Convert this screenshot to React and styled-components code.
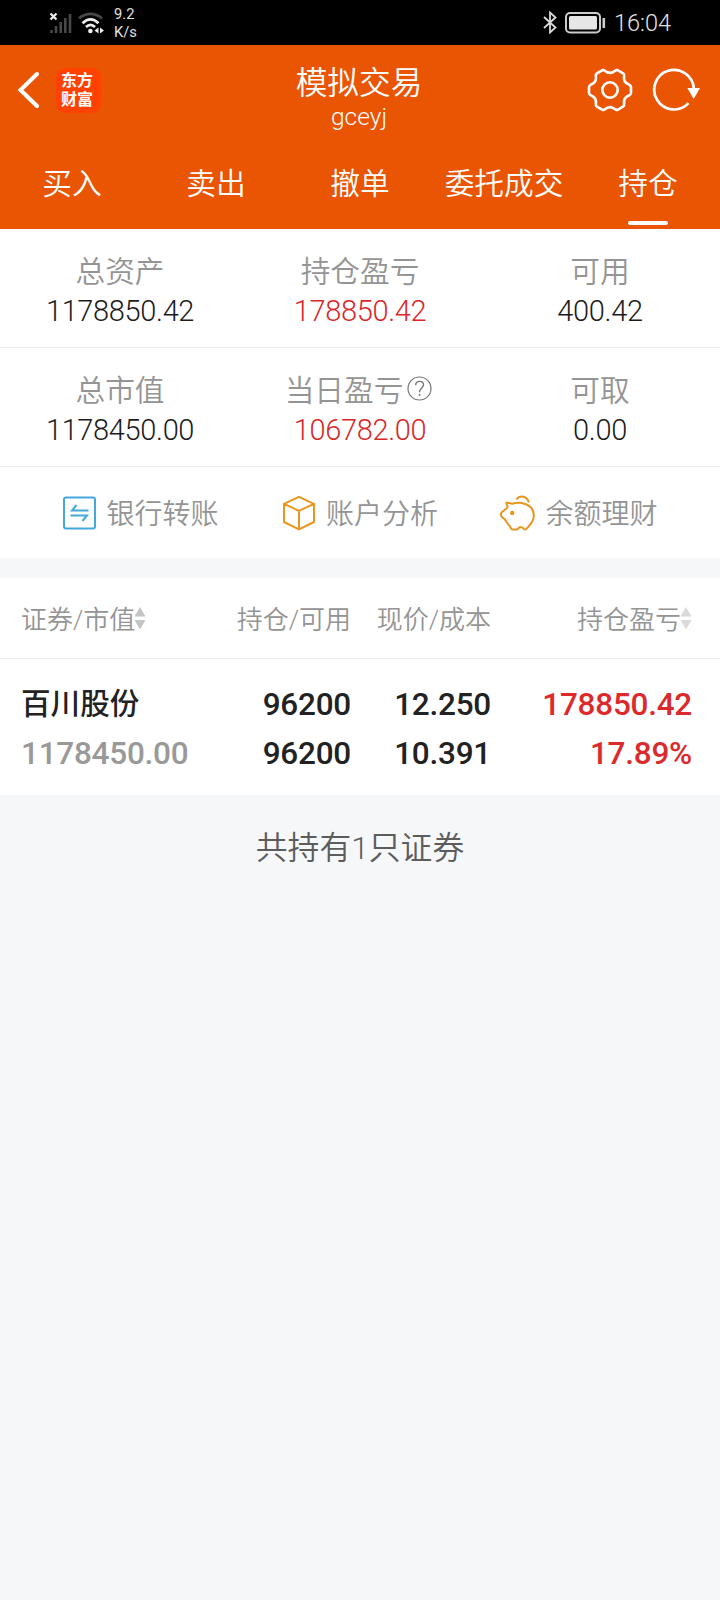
import React from "react";
import styled, { createGlobalStyle } from "styled-components";

const GlobalStyle = createGlobalStyle`
  * {
    box-sizing: border-box;
  }

  body {
    margin: 0;
    background: #f6f7f9;
    font-family: Roboto, "Noto Sans CJK SC", sans-serif;
    font-weight: 350;
  }
`;

const Page = styled.div`
  width: 720px;
  min-height: 1600px;
  background: #f6f7f9;
  white-space: nowrap;
`;

const StatusBar = styled.div`
  display: flex;
  align-items: center;
  height: 45px;
  padding: 0 49px;
  background: #000;
  color: #e2e2e2;
`;

const Signals = styled.div`
  display: flex;
  align-items: center;
  gap: 6px;
`;

const Speed = styled.div`
  margin-left: 10px;
  padding-top: 1px;
  font-size: 14.7px;
  font-weight: 400;
  line-height: 18px;
`;

const StatusRight = styled.div`
  display: flex;
  align-items: center;
  gap: 8px;
  margin-left: auto;
`;

const Clock = styled.span`
  padding-top: 1px;
  font-size: 23.5px;
  line-height: 28px;
`;

const Header = styled.header`
  height: 184px;
  background: #ea5504;
  color: #fff;
`;

const TitleBar = styled.div`
  display: grid;
  grid-template-columns: 1fr auto 1fr;
  align-items: center;
  height: 90px;
  padding: 0 19px 0 17px;
`;

const Left = styled.div`
  display: flex;
  align-items: center;
  gap: 16.5px;
`;

const Right = styled.div`
  display: flex;
  align-items: center;
  justify-content: flex-end;
  gap: 19px;
`;

const Logo = styled.div`
  width: 45px;
  height: 45px;
  padding: 3px 2px 0 0;
  border-radius: 9px;
  background: #ff4202;
  font-size: 16px;
  font-weight: 700;
  line-height: 19.5px;
  text-align: center;
`;

const Title = styled.div`
  align-self: start;
  padding-top: 19px;
  text-align: center;
`;

const TitleText = styled.h1`
  margin: 0;
  font-size: 31.7px;
  font-weight: inherit;
  line-height: 39px;
`;

const Account = styled.div`
  font-size: 24.5px;
  line-height: 28px;
`;

const Tabs = styled.nav`
  display: grid;
  grid-template-columns: repeat(5, 1fr);
  height: 94px;
`;

const Tab = styled.div`
  display: flex;
  flex-direction: column;
  align-items: center;
  padding-top: 29px;
  font-size: 29.7px;
  line-height: 40px;

  &::after {
    content: "";
    width: 40px;
    height: 4px;
    margin-top: 17px;
    border-radius: 2px;
    background: ${(props) => (props.$active ? "#fff" : "transparent")};
  }
`;

const StatRow = styled.div`
  display: grid;
  grid-template-columns: repeat(3, 1fr);
  height: 119px;
  padding-top: 23px;
  border-bottom: 1px solid #e9e9e9;
  background: #fff;
`;

const Stat = styled.div`
  display: flex;
  flex-direction: column;
  align-items: center;
  font-size: 29.7px;
  line-height: 39px;
`;

const StatLabel = styled.div`
  display: flex;
  align-items: center;
  gap: 4px;
  color: #949494;

  svg {
    margin: 0 3px 5px 0;
  }
`;

const StatValue = styled.div`
  font-size: 29px;
  letter-spacing: -0.35px;
  line-height: 40px;
  color: ${(props) => (props.$red ? "#d7292b" : "#1c1c1c")};
`;

const Actions = styled.div`
  display: flex;
  align-items: center;
  justify-content: space-evenly;
  height: 91px;
  padding-left: 1px;
  background: #fff;
`;

const Action = styled.div`
  display: flex;
  align-items: center;
  gap: 10px;
  color: #949494;
  font-size: 28px;
  line-height: 40px;

  span {
    padding-top: 2px;
    margin-bottom: -3px;
  }
`;

const Holdings = styled.section`
  margin-top: 20px;
  background: #fff;
`;

const HoldingGrid = styled.div`
  display: grid;
  grid-template-columns: 190px 140px 140px 1fr;
  padding: 0 28px 0 21px;
`;

const HoldingHead = styled(HoldingGrid)`
  height: 81px;
  border-bottom: 1px solid #e9e9e9;
  color: #949494;
  font-size: 26px;
  line-height: 84px;
`;

const HeadCell = styled.div`
  display: flex;
  align-items: center;
  justify-content: ${(props) => (props.$left ? "flex-start" : "flex-end")};

  svg {
    margin: 0 0 5px -1px;
  }
`;

const HoldingRow = styled(HoldingGrid)`
  height: 136px;
  padding-top: 21px;
  color: #222;
  font-size: 31.5px;
  font-weight: 500;
  letter-spacing: -0.25px;
  line-height: 49px;
`;

const HoldingCell = styled.div`
  text-align: ${(props) => (props.$left ? "left" : "right")};
  color: ${(props) => (props.$red ? "#dc2a2c" : "inherit")};
`;

const StockName = styled.div`
  font-size: 29.6px;
  letter-spacing: 0;
`;

const MarketValue = styled.div`
  color: #999;
`;

const Summary = styled.div`
  padding-top: 29px;
  color: #5c5c5c;
  font-size: 31.8px;
  line-height: 48px;
  text-align: center;
`;

const SignalIcon = () => (
  <svg width="23" height="22" viewBox="0 0 23 22" fill="none">
    <path
      d="M2.5 18v3M7 14v7M11.7 10v11M16.3 6v15M21 2v19"
      stroke="#484848"
      strokeWidth="2.6"
    />
    <path d="M1.5 1.5l6 6M7.5 1.5l-6 6" stroke="#eee" strokeWidth="2.2" />
  </svg>
);

const WifiIcon = () => (
  <svg width="26" height="22" viewBox="0 0 26 22" fill="none">
    <path d="M1 6.2Q12.5-2.5 24 6.2" stroke="#484848" strokeWidth="2.6" />
    <path
      d="M4.5 11.2Q12.5 3.6 20.5 11.2M8 15Q12.5 10.8 17 15"
      stroke="#eee"
      strokeWidth="2.8"
    />
    <circle cx="12.4" cy="19" r="2.3" fill="#eee" />
    <path d="M20.5 15.5v6l-4-3zM22 15.5v6l4-3z" fill="#eee" />
  </svg>
);

const BluetoothIcon = () => (
  <svg width="14" height="23" viewBox="0 0 14 23" fill="none">
    <path
      d="M1 6l11.5 10.5L7 21.5v-20l5.5 5L1 17"
      stroke="#d8d8d8"
      strokeWidth="1.8"
    />
  </svg>
);

const BatteryIcon = () => (
  <svg width="41" height="22" viewBox="0 0 41 22" fill="none">
    <rect x="1" y="1" width="34" height="19.5" rx="4" stroke="#ccc" strokeWidth="2" />
    <rect x="4" y="4" width="28" height="13.5" rx="1.5" fill="#e6e6e6" />
    <path d="M38.8 6v10" stroke="#ccc" strokeWidth="2.6" />
  </svg>
);

const BackIcon = () => (
  <svg width="22" height="38" viewBox="0 0 22 38" fill="none">
    <path
      d="M20 3L3.5 19L20 35"
      stroke="#fff"
      strokeWidth="4"
      strokeLinecap="round"
    />
  </svg>
);

const polar = (r, deg) => {
  const a = (deg * Math.PI) / 180;
  return `${(23 + r * Math.cos(a)).toFixed(2)} ${(23 + r * Math.sin(a)).toFixed(2)}`;
};

// six flat teeth joined by round notches
const gearPath =
  [0, 60, 120, 180, 240, 300]
    .map(
      (d, i) =>
        `${i ? "L" : "M"}${polar(20, d - 15)}Q${polar(21.2, d - 13)} ${polar(21.2, d - 8)}` +
        `L${polar(21.2, d + 8)}Q${polar(21.2, d + 13)} ${polar(20, d + 15)}` +
        `Q${polar(15, d + 30)} ${polar(20, d + 45)}`
    )
    .join("") + "Z";

const GearIcon = () => (
  <svg width="46" height="46" viewBox="0 0 46 46" fill="none" stroke="#fff">
    <path d={gearPath} strokeWidth="2.6" strokeLinejoin="round" />
    <circle cx="23" cy="23" r="7.7" strokeWidth="2.6" />
  </svg>
);

const RefreshIcon = () => (
  <svg width="49" height="44" viewBox="0 0 49 44" fill="none">
    <path
      d="M36.5 35.2A19.8 19.8 0 1 1 41.8 20.5"
      stroke="#fff"
      strokeWidth="2.7"
    />
    <path d="M35.3 20h12.7l-6.300 11z" fill="#fff" />
  </svg>
);

const HelpIcon = () => (
  <svg width="25" height="25" viewBox="0 0 25 25" fill="none" stroke="#777">
    <circle cx="12.5" cy="12.5" r="11.5" strokeWidth="1.2" />
    <path
      d="M8.7 9.3c0-2.300 1.600-3.900 3.900-3.900s3.900 1.500 3.900 3.600c0 3-3.900 3.600-3.900 6.600v.6"
      strokeWidth="1.4"
    />
    <path d="M12.6 18.1v1.8" strokeWidth="1.6" />
  </svg>
);

const TransferIcon = () => (
  <svg width="33" height="34" viewBox="0 0 33 34" fill="none" stroke="#45a8dc">
    <rect x="1" y="1.5" width="31" height="31" rx="2" strokeWidth="2" />
    <path d="M25.5 14.5H9l4.5-5.500M7.500 19.500H24l-4.500 5.500" strokeWidth="2" />
  </svg>
);

const CubeIcon = () => (
  <svg width="35" height="36" viewBox="-1.5 0 35 36" fill="none" stroke="#e8961e">
    <path
      d="M16.5 1.800L31.500 8.800V27L16.500 34.300L1.500 27V8.800zM1.500 8.800l15 7l15-7M16.500 15.800v18.500"
      strokeWidth="2"
      strokeLinejoin="round"
    />
  </svg>
);

const PiggyIcon = () => (
  <svg width="35" height="36" viewBox="0.5 0 35 36" fill="none" stroke="#e8961e">
    <path
      d="M7 7.5L13 8.700C16 7.700 21 7.500 25 8.800C31 10.800 34.300 15 34.300 20C34.300 25 32 28.500 29.500 31C28 33 27 34.500 25.500 34.500C23.500 34.500 24 32.300 22.300 32.300H20.500C18.800 32.300 19 34.500 17 34.500H13C11 34.500 11.500 32 9.500 30.300C7.500 28.500 7 26 5 24C3.500 22.500 1.500 22.300 1.500 20V18.500C1.500 16.700 3.300 16.500 4.500 15.500C5.700 14.500 7.500 13.500 8 12C8.500 10.500 6.500 9.500 7 7.500z"
      strokeWidth="2"
      strokeLinejoin="round"
    />
    <path d="M17 4.5C19.500.7 27.500-.3 29.300 7.500" strokeWidth="2" />
    <circle cx="12.7" cy="18" r="2.2" fill="#e8961e" stroke="none" />
  </svg>
);

const SortIcon = ({ color }) => (
  <svg width="12" height="24" viewBox="0 0 12 24" fill={color}>
    <path d="M6 1l5.500 9.500H.5zM6 23.500l5.500-9.500H.5z" />
  </svg>
);

const tabs = ["买入", "卖出", "撤单", "委托成交", "持仓"];

const stats = [
  [
    { label: "总资产", value: "1178850.42" },
    { label: "持仓盈亏", value: "178850.42", red: true },
    { label: "可用", value: "400.42" },
  ],
  [
    { label: "总市值", value: "1178450.00" },
    { label: "当日盈亏", value: "106782.00", red: true, help: true },
    { label: "可取", value: "0.00" },
  ],
];

const App = () => {
  return (
    <Page>
      <GlobalStyle />
      <StatusBar>
        <Signals>
          <SignalIcon />
          <WifiIcon />
        </Signals>
        <Speed>
          <div>9.2</div>
          <div>K/s</div>
        </Speed>
        <StatusRight>
          <BluetoothIcon />
          <BatteryIcon />
          <Clock>16:04</Clock>
        </StatusRight>
      </StatusBar>

      <Header>
        <TitleBar>
          <Left>
            <BackIcon />
            <Logo>
              <div>东方</div>
              <div>财富</div>
            </Logo>
          </Left>
          <Title>
            <TitleText>模拟交易</TitleText>
            <Account>gceyj</Account>
          </Title>
          <Right>
            <GearIcon />
            <RefreshIcon />
          </Right>
        </TitleBar>
        <Tabs>
          {tabs.map((tab) => (
            <Tab key={tab} $active={tab === "持仓"}>
              {tab}
            </Tab>
          ))}
        </Tabs>
      </Header>

      {stats.map((row, i) => (
        <StatRow key={i}>
          {row.map((stat) => (
            <Stat key={stat.label}>
              <StatLabel>
                {stat.label}
                {stat.help && <HelpIcon />}
              </StatLabel>
              <StatValue $red={stat.red}>{stat.value}</StatValue>
            </Stat>
          ))}
        </StatRow>
      ))}

      <Actions>
        <Action>
          <TransferIcon />
          <span>银行转账</span>
        </Action>
        <Action>
          <CubeIcon />
          <span>账户分析</span>
        </Action>
        <Action>
          <PiggyIcon />
          <span>余额理财</span>
        </Action>
      </Actions>

      <Holdings>
        <HoldingHead>
          <HeadCell $left>
            证券/市值
            <SortIcon color="#c4c4c4" />
          </HeadCell>
          <HeadCell>持仓/可用</HeadCell>
          <HeadCell>现价/成本</HeadCell>
          <HeadCell>
            持仓盈亏
            <SortIcon color="#dadada" />
          </HeadCell>
        </HoldingHead>
        <HoldingRow>
          <HoldingCell $left>
            <StockName>百川股份</StockName>
            <MarketValue>1178450.00</MarketValue>
          </HoldingCell>
          <HoldingCell>
            <div>96200</div>
            <div>96200</div>
          </HoldingCell>
          <HoldingCell>
            <div>12.250</div>
            <div>10.391</div>
          </HoldingCell>
          <HoldingCell $red>
            <div>178850.42</div>
            <div>17.89%</div>
          </HoldingCell>
        </HoldingRow>
      </Holdings>

      <Summary>共持有1只证券</Summary>
    </Page>
  );
};

export default App;
